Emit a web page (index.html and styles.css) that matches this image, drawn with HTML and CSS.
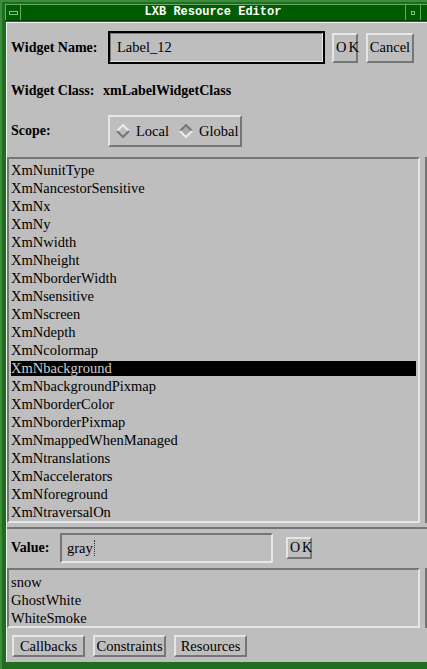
FILE: index.html
```html
<!DOCTYPE html>
<html>
<head>
<meta charset="utf-8">
<link rel="stylesheet" href="styles.css">
</head>
<body>
<div class="window">
  <div class="titlebar">
    <div class="tbtn tbtn-left"><span class="minmark"></span></div>
    <div class="title">LXB Resource Editor</div>
    <div class="tbtn tbtn-right"><span class="maxmark"></span></div>
  </div>
  <div class="client">
    <div class="main">
      <div class="row row-name">
        <span class="label lbl-name">Widget Name:</span>
        <div class="field field-name"><span>Label_12</span></div>
        <button class="btn btn-ok">OK</button>
        <button class="btn btn-cancel">Cancel</button>
      </div>
      <div class="row row-class">
        <span class="label lbl-class">Widget Class:</span>
        <span class="label">xmLabelWidgetClass</span>
      </div>
      <div class="row row-scope">
        <span class="label lbl-scope">Scope:</span>
        <div class="radiobox">
          <span class="radio">
            <svg width="14" height="14" viewBox="0 0 14 14"><polygon points="7,1 13,7 7,13 1,7" fill="#bebebe"/><polyline points="1,7 7,1 13,7" fill="none" stroke="#ececec" stroke-width="2"/><polyline points="1,7 7,13 13,7" fill="none" stroke="#777" stroke-width="2"/></svg>
            <span>Local</span>
          </span>
          <span class="radio">
            <svg width="14" height="14" viewBox="0 0 14 14"><polygon points="7,1 13,7 7,13 1,7" fill="#a9a9a9"/><polyline points="1,7 7,1 13,7" fill="none" stroke="#777" stroke-width="2"/><polyline points="1,7 7,13 13,7" fill="none" stroke="#ececec" stroke-width="2"/></svg>
            <span>Global</span>
          </span>
        </div>
      </div>
      <div class="listwrap list-main">
        <ul class="list">
          <li>XmNunitType</li>
          <li>XmNancestorSensitive</li>
          <li>XmNx</li>
          <li>XmNy</li>
          <li>XmNwidth</li>
          <li>XmNheight</li>
          <li>XmNborderWidth</li>
          <li>XmNsensitive</li>
          <li>XmNscreen</li>
          <li>XmNdepth</li>
          <li>XmNcolormap</li>
          <li class="sel">XmNbackground</li>
          <li>XmNbackgroundPixmap</li>
          <li>XmNborderColor</li>
          <li>XmNborderPixmap</li>
          <li>XmNmappedWhenManaged</li>
          <li>XmNtranslations</li>
          <li>XmNaccelerators</li>
          <li>XmNforeground</li>
          <li>XmNtraversalOn</li>
        </ul>
        <div class="scrollbar"></div>
      </div>
      <div class="pane">
        <div class="row row-value">
          <span class="label lbl-value">Value:</span>
          <div class="field field-value"><span>gray</span><span class="ibeam"></span></div>
          <button class="btn btn-ok2">OK</button>
        </div>
        <div class="listwrap list-colors">
          <ul class="list">
            <li>snow</li>
            <li>GhostWhite</li>
            <li>WhiteSmoke</li>
          </ul>
          <div class="scrollbar"></div>
        </div>
        <div class="row row-buttons">
          <button class="btn btn-wide">Callbacks</button>
          <button class="btn btn-wide">Constraints</button>
          <button class="btn btn-wide">Resources</button>
        </div>
      </div>
    </div>
  </div>
</div>
</body>
</html>
```
FILE: styles.css
```css
html, body {
  margin: 0;
  padding: 0;
  overflow: hidden;
  background: #1d6a1d;
}
body {
  width: 427px;
  height: 669px;
}
.window {
  width: 450px;
  height: 669px;
  box-sizing: border-box;
  background: #1f6e1f;
  border-left: 2px solid #3c8c3c;
  border-top: 2px solid #3c8c3c;
  padding: 2px 0 0 4px;
  display: flex;
  flex-direction: column;
}
.titlebar {
  display: flex;
  height: 17px;
  box-sizing: border-box;
  margin-left: -1px;
  border-top: 1px solid #6aa86a;
  border-bottom: 1px solid #0b3d0b;
  background: #005c00;
}
.tbtn {
  width: 16px;
  box-sizing: border-box;
  border-left: 1px solid #6aa86a;
  border-right: 1px solid #6aa86a;
  display: flex;
  align-items: center;
  justify-content: center;
}
.minmark {
  width: 7px;
  height: 2px;
  border: 1px solid #7fbf7f;
}
.maxmark {
  width: 2px;
  height: 2px;
  border: 1px solid #7fbf7f;
}
.title {
  flex: 0 0 384px;
  text-align: center;
  color: #ffffff;
  font-family: "Liberation Mono", monospace;
  font-weight: bold;
  font-size: 12px;
  line-height: 15px;
}
.client {
  margin-top: 1px;
  background: #bebebe;
  border-top: 1px solid #f2f2f2;
  border-left: 1px solid #f2f2f2;
  flex: 1;
  margin-bottom: 7px;
}
.main {
  display: flex;
  flex-direction: column;
  font-family: "Liberation Serif", serif;
  font-size: 14px;
  color: #000;
}
.row {
  display: flex;
  align-items: center;
}
.label {
  font-weight: bold;
  font-family: "Liberation Serif", serif;
  font-size: 14px;
}
.row-name {
  margin-top: 8px;
  height: 33px;
  padding-left: 4px;
}
.lbl-name {
  width: 97px;
}
.field {
  box-sizing: border-box;
  background: #bebebe;
  display: flex;
  align-items: center;
  font-size: 14.5px;
}
.field-name {
  width: 217px;
  height: 33px;
  border: 2px solid #000;
  box-shadow: inset -1px -1px 0 #e6e6e6, inset 1px 1px 0 #7a7a7a;
  padding-left: 7px;
}
.btn {
  box-sizing: border-box;
  background: #bebebe;
  border-style: solid;
  border-width: 2px;
  border-color: #e6e6e6 #767676 #767676 #e6e6e6;
  font-family: "Liberation Serif", serif;
  font-size: 14.5px;
  color: #000;
  padding: 0;
  margin: 0;
}
.btn-ok {
  width: 26px;
  height: 30px;
  margin-left: 7px;
  letter-spacing: 2px;
  padding-left: 2px;
}
.btn-cancel {
  width: 48px;
  height: 30px;
  margin-left: 8px;
}
.row-class {
  margin-top: 18px;
  height: 18px;
  padding-left: 4px;
}
.lbl-class {
  width: 92px;
}
.row-scope {
  margin-top: 15px;
  height: 32px;
  padding-left: 4px;
}
.lbl-scope {
  width: 97px;
}
.radiobox {
  box-sizing: border-box;
  width: 134px;
  height: 32px;
  border-style: solid;
  border-width: 2px;
  border-color: #e6e6e6 #767676 #767676 #e6e6e6;
  display: flex;
  align-items: center;
  padding-left: 6px;
  gap: 10px;
  font-size: 14.5px;
}
.radio {
  display: flex;
  align-items: center;
  gap: 6px;
}
.listwrap {
  display: flex;
}
.list-main {
  margin-top: 10px;
  height: 366px;
}
.list {
  list-style: none;
  margin: 0;
  box-sizing: border-box;
  width: 413px;
  height: 100%;
  border-style: solid;
  border-width: 2px;
  border-color: #767676 #e6e6e6 #e6e6e6 #767676;
  padding: 4px 2px 0 2px;
  font-family: "Liberation Serif", serif;
  font-size: 14.5px;
  overflow: hidden;
}
.list li {
  height: 15px;
  line-height: 15px;
  margin-bottom: 3px;
  white-space: nowrap;
}
.list li.sel {
  background: #000;
  color: #cfcfcf;
}
.scrollbar {
  margin-left: 5px;
  width: 20px;
  height: 100%;
  box-sizing: border-box;
  border-left: 2px solid #767676;
  border-top: 2px solid #767676;
}
.pane {
  margin-top: 4px;
  border-top: 2px solid #767676;
  display: flex;
  flex-direction: column;
}
.row-value {
  height: 34px;
  margin-top: 2px;
  padding-left: 4px;
}
.lbl-value {
  width: 49px;
}
.field-value {
  width: 213px;
  height: 30px;
  border-style: solid;
  border-width: 2px;
  border-color: #767676 #e6e6e6 #e6e6e6 #767676;
  padding-left: 5px;
  font-size: 14.5px;
}
.ibeam {
  display: inline-block;
  width: 1px;
  height: 16px;
  margin-left: 1px;
  border-left: 1px dotted #333;
}
.btn-ok2 {
  width: 26px;
  height: 22px;
  margin-left: 13px;
  letter-spacing: 2px;
  padding-left: 2px;
  font-size: 14px;
}
.list-colors {
  margin-top: 3px;
  height: 60px;
}
.list-colors .list {
  padding-top: 5px;
}
.row-buttons {
  margin-top: 7px;
  padding-left: 5px;
  gap: 8px;
  height: 22px;
}
.btn-wide {
  width: 73px;
  height: 22px;
  font-size: 14.5px;
}
```
